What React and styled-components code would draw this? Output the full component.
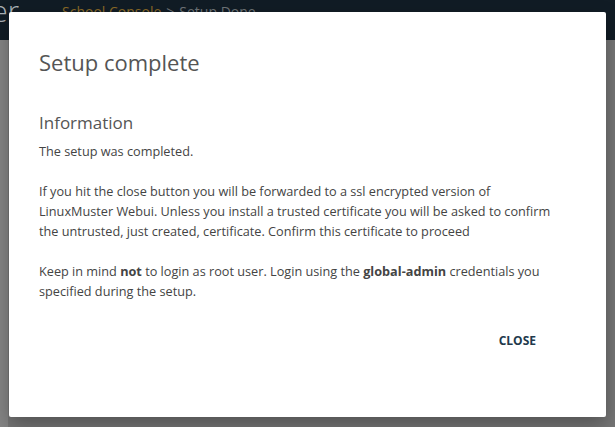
import React from 'react';
import styled, { createGlobalStyle } from 'styled-components';

const GlobalStyle = createGlobalStyle`
  html, body {
    margin: 0;
    padding: 0;
    height: 100%;
  }
  body {
    font-family: "Open Sans", "Noto Sans", sans-serif;
    overflow: hidden;
  }
  #root {
    height: 100%;
  }
`;

const Page = styled.div`
  position: relative;
  display: flex;
  flex-direction: column;
  height: 100vh;
  background: #767676;
`;

const Header = styled.div`
  display: flex;
  align-items: flex-start;
  height: 40px;
  background: #111c25;
  overflow: hidden;
`;

const Logo = styled.div`
  display: flex;
  justify-content: flex-end;
  width: 19px;
  margin-top: -9px;
  overflow: hidden;
  font-size: 29px;
  font-weight: 300;
  color: #aab1b6;
  white-space: nowrap;
`;

const Breadcrumb = styled.div`
  display: flex;
  gap: 5px;
  margin-left: 43px;
  padding-top: 2px;
  font-size: 14px;
  color: #6f7478;
`;

const Crumb = styled.span`
  color: ${(p) => (p.$link ? '#8b6a27' : '#6f7478')};
`;

const Body = styled.div`
  flex: 1;
  display: flex;
`;

const Sidebar = styled.div`
  width: 8px;
  background: #858585;
`;

const Main = styled.div`
  flex: 1;
  background: #767676;
`;

const Dialog = styled.div`
  position: absolute;
  left: 9px;
  top: 12px;
  width: 597px;
  height: 405px;
  box-sizing: border-box;
  background: #ffffff;
  border-radius: 2px;
  box-shadow: 0 8px 20px rgba(0, 0, 0, 0.3);
  padding: 36px 50px 24px 30px;
  display: flex;
  flex-direction: column;
`;

const Title = styled.h2`
  margin: 0 0 35px;
  font-size: 22px;
  line-height: 28px;
  font-weight: 400;
  color: #555;
`;

const Section = styled.h3`
  margin: 0 0 6px;
  font-size: 17px;
  line-height: 24px;
  font-weight: 400;
  color: #555;
`;

const Text = styled.p`
  margin: 0 0 20px;
  font-size: 12.7px;
  line-height: 20px;
  color: #444;
`;

const Actions = styled.div`
  display: flex;
  justify-content: flex-end;
  padding-right: 20px;
  margin-top: 5px;
`;

const TextButton = styled.button`
  border: none;
  background: none;
  padding: 6px 0;
  font-family: inherit;
  font-size: 12px;
  font-weight: 700;
  color: #22394b;
  cursor: pointer;
`;

export default function App() {
  return (
    <>
      <GlobalStyle />
      <Page>
        <Header>
          <Logo>linuxmuster</Logo>
          <Breadcrumb>
            <Crumb $link>School Console</Crumb>
            <Crumb>&gt;</Crumb>
            <Crumb>Setup Done</Crumb>
          </Breadcrumb>
        </Header>
        <Body>
          <Sidebar />
          <Main />
        </Body>
        <Dialog>
          <Title>Setup complete</Title>
          <Section>Information</Section>
          <Text>The setup was completed.</Text>
          <Text>
            If you hit the close button you will be forwarded to a ssl encrypted version of
            LinuxMuster Webui. Unless you install a trusted certificate you will be asked to confirm
            the untrusted, just created, certificate. Confirm this certificate to proceed
          </Text>
          <Text>
            Keep in mind <b>not</b> to login as root user. Login using the <b>global-admin</b>{' '}
            credentials you specified during the setup.
          </Text>
          <Actions>
            <TextButton>CLOSE</TextButton>
          </Actions>
        </Dialog>
      </Page>
    </>
  );
}
